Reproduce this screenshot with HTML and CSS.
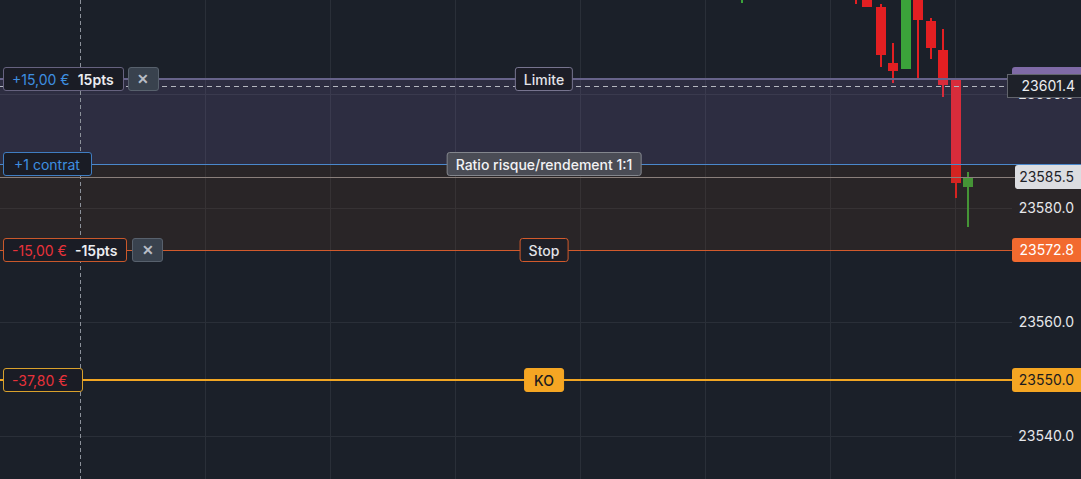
FILE: index.html
```html
<!DOCTYPE html>
<html lang="fr">
<head>
<meta charset="utf-8">
<title>Graphique</title>
<link rel="stylesheet" href="styles.css">
</head>
<body>
<div class="chart">
  <svg class="plot" width="1081" height="479" viewBox="0 0 1081 479">
    <g class="grid">
      <line x1="205.5" y1="0" x2="205.5" y2="479"/>
      <line x1="330.5" y1="0" x2="330.5" y2="479"/>
      <line x1="455.5" y1="0" x2="455.5" y2="479"/>
      <line x1="580.5" y1="0" x2="580.5" y2="479"/>
      <line x1="705.5" y1="0" x2="705.5" y2="479"/>
      <line x1="830.5" y1="0" x2="830.5" y2="479"/>
      <line x1="955.5" y1="0" x2="955.5" y2="479"/>
      <line x1="0" y1="94.5" x2="1012" y2="94.5"/>
      <line x1="0" y1="208.5" x2="1012" y2="208.5"/>
      <line x1="0" y1="322.5" x2="1012" y2="322.5"/>
      <line x1="0" y1="436.5" x2="1012" y2="436.5"/>
    </g>
    <g class="candles">
      <rect class="up" x="741" y="0" width="2" height="3"/>
      <rect class="down" x="855" y="0" width="2" height="4"/>
      <rect class="down" x="862" y="0" width="10" height="7"/>
      <rect class="down" x="880" y="4" width="2" height="63"/>
      <rect class="down" x="876" y="7" width="10" height="48"/>
      <rect class="down" x="892" y="43" width="2" height="40"/>
      <rect class="down" x="888" y="63" width="10" height="8"/>
      <rect class="up" x="901" y="0" width="10" height="69"/>
      <rect class="down" x="917" y="0" width="2" height="79"/>
      <rect class="down" x="913" y="0" width="10" height="20"/>
      <rect class="down" x="930" y="18" width="2" height="41"/>
      <rect class="down" x="926" y="21" width="10" height="27"/>
      <rect class="down" x="942" y="29" width="2" height="68"/>
      <rect class="down" x="938" y="50" width="10" height="35"/>
      <rect class="down" x="955" y="80" width="2" height="118"/>
      <rect class="down" x="951" y="80" width="10" height="103"/>
      <rect class="up" x="967" y="172" width="2" height="55"/>
      <rect class="up" x="963" y="177" width="10" height="10"/>
    </g>
    <rect class="zone-profit" x="0" y="79" width="1081" height="85"/>
    <rect class="zone-loss" x="0" y="164" width="1081" height="86"/>
    <line class="cross-v" x1="80.5" y1="0" x2="80.5" y2="479"/>
    <line class="cross-h" x1="0" y1="86.5" x2="1007" y2="86.5"/>
  </svg>

  <span class="axis-label" style="top:94px">23600.0</span>
  <span class="axis-label" style="top:208px">23580.0</span>
  <span class="axis-label" style="top:322px">23560.0</span>
  <span class="axis-label" style="top:436px">23540.0</span>

  <div class="order order-limit" style="top:79px">
    <span class="tag"><span class="pnl pnl-pos">+15,00 €</span><span class="pts">15pts</span></span>
    <button class="close" type="button">✕</button>
    <span class="mid mid-dark">Limite</span>
    <span class="price-tag" aria-hidden="true"></span>
  </div>

  <div class="order order-entry" style="top:164px">
    <span class="tag"><span class="pnl pnl-pos">+1 contrat</span></span>
    <span class="mid mid-grey">Ratio risque/rendement 1:1</span>
  </div>

  <div class="order order-last" style="top:177px">
    <span class="price-tag">23585.5</span>
  </div>

  <div class="order order-stop" style="top:250px">
    <span class="tag"><span class="pnl pnl-neg">-15,00 €</span><span class="pts">-15pts</span></span>
    <button class="close" type="button">✕</button>
    <span class="mid mid-dark">Stop</span>
    <span class="price-tag">23572.8</span>
  </div>

  <div class="order order-ko" style="top:380px">
    <span class="tag"><span class="pnl pnl-neg">-37,80 €</span></span>
    <span class="mid mid-ko">KO</span>
    <span class="price-tag">23550.0</span>
  </div>

  <span class="cross-price" style="top:86px">23601.4</span>
</div>
</body>
</html>
```

FILE: styles.css
```css
html, body {
  margin: 0;
  background: #1b2029;
}

.chart {
  position: relative;
  width: 1081px;
  height: 479px;
  overflow: hidden;
  background: #1b2029;
  font-family: Inter, "Noto Sans", "Liberation Sans", sans-serif;
  font-size: 14px;
  color: #e6e7ea;
}

.plot {
  position: absolute;
  left: 0;
  top: 0;
  display: block;
}

.grid line {
  stroke: #2a2f38;
  stroke-width: 1;
}

.candles .up { fill: #3ba33a; }
.candles .down { fill: #e31f22; }

.zone-profit { fill: rgba(154, 119, 208, 0.15); }
.zone-loss { fill: rgba(127, 65, 34, 0.15); }

.cross-v {
  stroke: #8c919a;
  stroke-width: 1;
  stroke-dasharray: 4 3;
}

.cross-h {
  stroke: #b4b7bf;
  stroke-width: 1;
  stroke-dasharray: 5 4;
}

/* price axis labels */
.axis-label {
  position: absolute;
  right: 7px;
  transform: translateY(-50%);
  line-height: 16px;
  color: #e6e7ea;
}

/* order lines */
.order {
  position: absolute;
  left: 0;
  right: 0;
  height: 24px;
  transform: translateY(-50%);
  display: flex;
  align-items: center;
  gap: 4px;
  padding-left: 3px;
  box-sizing: border-box;
}

.order::before {
  content: "";
  position: absolute;
  left: 0;
  right: 0;
  top: 12px;
  height: 2px;
  margin-top: -1px;
  background: var(--line);
}

.order > .tag,
.order > .close,
.order > .price-tag {
  position: relative;
}

.order-limit { --line: #67638a; --border: #66627f; }
.order-entry { --line: #4a88cc; --border: #3f7dc2; }
.order-last  { --line: #8a7f7b; }
.order-stop  { --line: #d25a2c; --border: #c9582b; }
.order-ko    { --line: #f2a623; --border: #d9a12c; }

.order-entry::before,
.order-last::before,
.order-stop::before {
  height: 1px;
  margin-top: 0;
}

.tag {
  height: 24px;
  box-sizing: border-box;
  display: flex;
  align-items: center;
  gap: 8px;
  padding: 0 9px 0 8px;
  border: 1px solid var(--border);
  border-radius: 3px;
  background: #1a1c25;
  white-space: nowrap;
}

.order-entry .tag { padding: 0 11px 0 10px; }
.order-ko .tag { padding: 0 14px 0 8px; }

.pnl-pos { color: #3e8fe0; }
.pnl-neg { color: #e8323a; }

.pts {
  color: #ecedf0;
  font-weight: 600;
}

.close {
  width: 31px;
  height: 24px;
  box-sizing: border-box;
  margin: 0;
  padding: 0;
  border: 1px solid #58616d;
  border-radius: 3px;
  background: #39424e;
  color: #b8bdc5;
  font-family: inherit;
  font-size: 14px;
  font-weight: 700;
  line-height: 22px;
  text-align: center;
}

.order-stop .close { margin-left: 1px; }

.mid {
  position: absolute;
  left: 544px;
  top: 0;
  transform: translateX(-50%);
  height: 24px;
  box-sizing: border-box;
  padding: 0 8px;
  border: 1px solid;
  border-radius: 3px;
  display: flex;
  align-items: center;
  white-space: nowrap;
  font-weight: 500;
}

.mid-dark {
  background: #1c1d27;
  border-color: #77748f;
  color: #e2e2e7;
}

.order-stop .mid-dark {
  border-color: #d25a2c;
  background: #1f1f26;
}

.mid-grey {
  background: #4a4c55;
  border-color: #83868d;
  color: #f2f2f4;
}

.mid-ko {
  background: #f5a623;
  border-color: #f5a623;
  color: #1b1b1f;
  padding: 0 9px;
}

.price-tag {
  margin-left: auto;
  width: 69px;
  height: 24px;
  box-sizing: border-box;
  padding-right: 7px;
  border-radius: 3px 0 0 3px;
  line-height: 24px;
  text-align: right;
}

.order-limit .price-tag { background: #7f6aa6; color: #ffffff; }
.order-last .price-tag { width: 66px; background: #dcdde1; color: #1e2229; }
.order-stop .price-tag { background: #f26a2f; color: #ffffff; }
.order-ko .price-tag { background: #f5a623; color: #1b1b1f; }

.cross-price {
  position: absolute;
  left: 1007px;
  width: 74px;
  height: 24px;
  transform: translateY(-50%);
  box-sizing: border-box;
  padding-right: 6px;
  border: 1px solid #62656d;
  border-right: none;
  background: #1e2129;
  color: #eceef1;
  line-height: 22px;
  text-align: right;
}
```
